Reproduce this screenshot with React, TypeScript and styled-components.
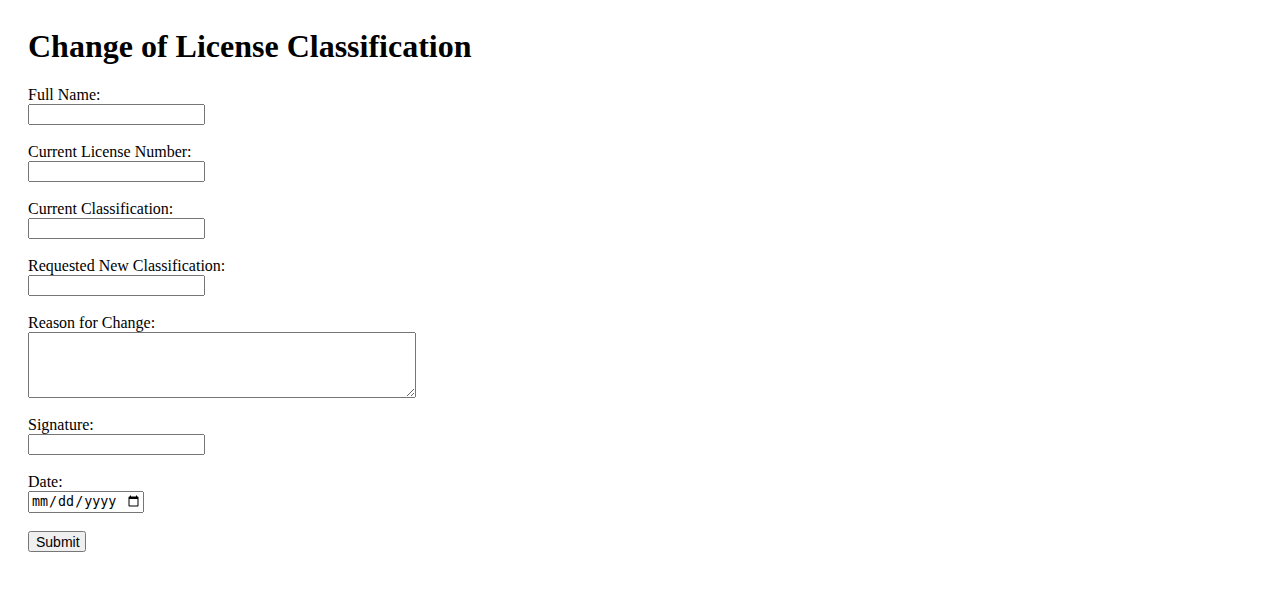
import styled, { createGlobalStyle } from 'styled-components';

const GlobalStyle = createGlobalStyle`
  body {
    margin: 0;
    background: #ffffff;
    color: #000000;
    font-family: "Liberation Serif", "Times New Roman", serif;
    font-size: 16px;
  }
`;

interface FieldDef {
  id: string;
  label: string;
  kind: 'text' | 'textarea' | 'date';
}

const fields: FieldDef[] = [
  { id: 'fullName', label: 'Full Name:', kind: 'text' },
  { id: 'licenseNumber', label: 'Current License Number:', kind: 'text' },
  { id: 'currentClass', label: 'Current Classification:', kind: 'text' },
  { id: 'newClass', label: 'Requested New Classification:', kind: 'text' },
  { id: 'reason', label: 'Reason for Change:', kind: 'textarea' },
  { id: 'signature', label: 'Signature:', kind: 'text' },
  { id: 'date', label: 'Date:', kind: 'date' },
];

const App: React.FC = () => {
  return (
    <>
      <GlobalStyle />
      <Page>
        <Title>Change of License Classification</Title>
        <Form onSubmit={(e) => e.preventDefault()}>
          {fields.map((f) => (
            <Field key={f.id}>
              <Label htmlFor={f.id}>{f.label}</Label>
              {f.kind === 'textarea' && <TextArea id={f.id} name={f.id} />}
              {f.kind === 'text' && <TextInput id={f.id} name={f.id} type="text" />}
              {f.kind === 'date' && <DateInput id={f.id} name={f.id} type="date" />}
            </Field>
          ))}
          <SubmitBtn type="submit">Submit</SubmitBtn>
        </Form>
      </Page>
    </>
  );
};

const Page = styled.div`
  display: flow-root;
  padding: 0 28px;
`;

const Title = styled.h1`
  margin: 28px 0 21px;
  font-size: 32px;
  font-weight: 700;
  line-height: 37px;
`;

const Form = styled.form`
  display: flex;
  flex-direction: column;
  align-items: flex-start;
  gap: 18px;
`;

const Field = styled.div`
  display: flex;
  flex-direction: column;
  align-items: flex-start;
`;

const Label = styled.label`
  font-size: 16px;
  line-height: 18px;
`;

const TextInput = styled.input`
  box-sizing: border-box;
  width: 177px;
  height: 21px;
  margin: 0;
`;

const TextArea = styled.textarea`
  box-sizing: border-box;
  width: 388px;
  height: 66px;
  margin: 0;
`;

const DateInput = styled.input`
  box-sizing: border-box;
  width: 116px;
  height: 22px;
  margin: 0;
`;

const SubmitBtn = styled.button`
  box-sizing: border-box;
  width: 58px;
  height: 21px;
  margin: 0;
  padding: 1px 6px;
  font-family: "Liberation Sans", Arial, sans-serif;
  font-size: 14px;
`;

export default App;
